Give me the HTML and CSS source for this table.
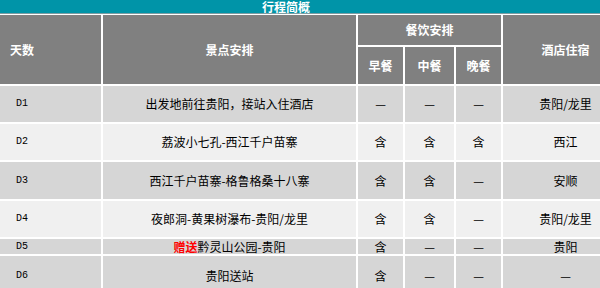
FILE: index.html
```html
<!DOCTYPE html>
<html lang="zh">
<head>
<meta charset="utf-8">
<link rel="stylesheet" href="styles.css">
</head>
<body>
<div class="title"><span class="title-text">行程简概</span></div>
<div class="sched">
  <div class="h h-day">天数</div>
  <div class="h h-spot">景点安排</div>
  <div class="h h-meal">餐饮安排</div>
  <div class="h h-hotel">酒店住宿</div>
  <div class="h">早餐</div>
  <div class="h">中餐</div>
  <div class="h">晚餐</div>

  <div class="c dark day">D1</div><div class="c dark">出发地前往贵阳，接站入住酒店</div><div class="c dark">—</div><div class="c dark">—</div><div class="c dark">—</div><div class="c dark hotel">贵阳/龙里</div>
  <div class="c light day">D2</div><div class="c light">荔波小七孔-西江千户苗寨</div><div class="c light">含</div><div class="c light">含</div><div class="c light">含</div><div class="c light hotel">西江</div>
  <div class="c dark day">D3</div><div class="c dark">西江千户苗寨-格鲁格桑十八寨</div><div class="c dark">含</div><div class="c dark">含</div><div class="c dark">—</div><div class="c dark hotel">安顺</div>
  <div class="c light day">D4</div><div class="c light">夜郎洞-黄果树瀑布-贵阳/龙里</div><div class="c light">含</div><div class="c light">含</div><div class="c light">—</div><div class="c light hotel">贵阳/龙里</div>
  <div class="c dark day">D5</div><div class="c dark"><span class="gift">赠送</span>黔灵山公园-贵阳</div><div class="c dark">含</div><div class="c dark">—</div><div class="c dark">—</div><div class="c dark hotel">贵阳</div>
  <div class="c dark day">D6</div><div class="c dark">贵阳送站</div><div class="c dark">含</div><div class="c dark">—</div><div class="c dark">—</div><div class="c dark hotel">—</div>
</div>
</body>
</html>
```
FILE: styles.css
```css
html, body {
  margin: 0;
  padding: 0;
  background: #ffffff;
  width: 600px;
  height: 288px;
  overflow: hidden;
  font-family: "Noto Sans CJK SC", "DejaVu Sans", sans-serif;
  font-size: 12px;
}
.title {
  height: 13px;
  background: #0094a8;
  border-bottom: 1px solid #7f9da3;
  color: #ffffff;
  font-weight: bold;
  display: flex;
  align-items: center;
  justify-content: center;
  padding-right: 28px;
  margin-bottom: 1px;
}
.title-text {
  font-size: 12px;
  line-height: 13px;
}
.sched {
  display: grid;
  grid-template-columns: 101px 253px 45px 49px 45px 1fr;
  grid-template-rows: 30px 37px 36px 36px 37px 36px 15px 40px;
  gap: 2px;
  background: #ffffff;
}
.h {
  background: #808080;
  color: #ffffff;
  font-weight: bold;
  display: flex;
  align-items: center;
  justify-content: center;
  line-height: 1;
}
.h-day {
  grid-row: 1 / span 2;
  justify-content: flex-start;
  padding-left: 10px;
}
.h-spot { grid-row: 1 / span 2; }
.h-meal { grid-column: 3 / span 3; }
.h-hotel {
  grid-column: 6;
  grid-row: 1 / span 2;
  padding-left: 28px;
}
.c {
  display: flex;
  align-items: center;
  justify-content: center;
  color: #000000;
  line-height: 1;
  white-space: nowrap;
}
.dark { background: #d6d6d6; }
.light { background: #f0f0f0; }
.day {
  justify-content: flex-start;
  padding-left: 16px;
  font-family: "Liberation Mono", monospace;
  font-size: 10px;
}
.hotel { padding-left: 28px; }
.gift {
  color: #ff0000;
  font-weight: bold;
}
```
